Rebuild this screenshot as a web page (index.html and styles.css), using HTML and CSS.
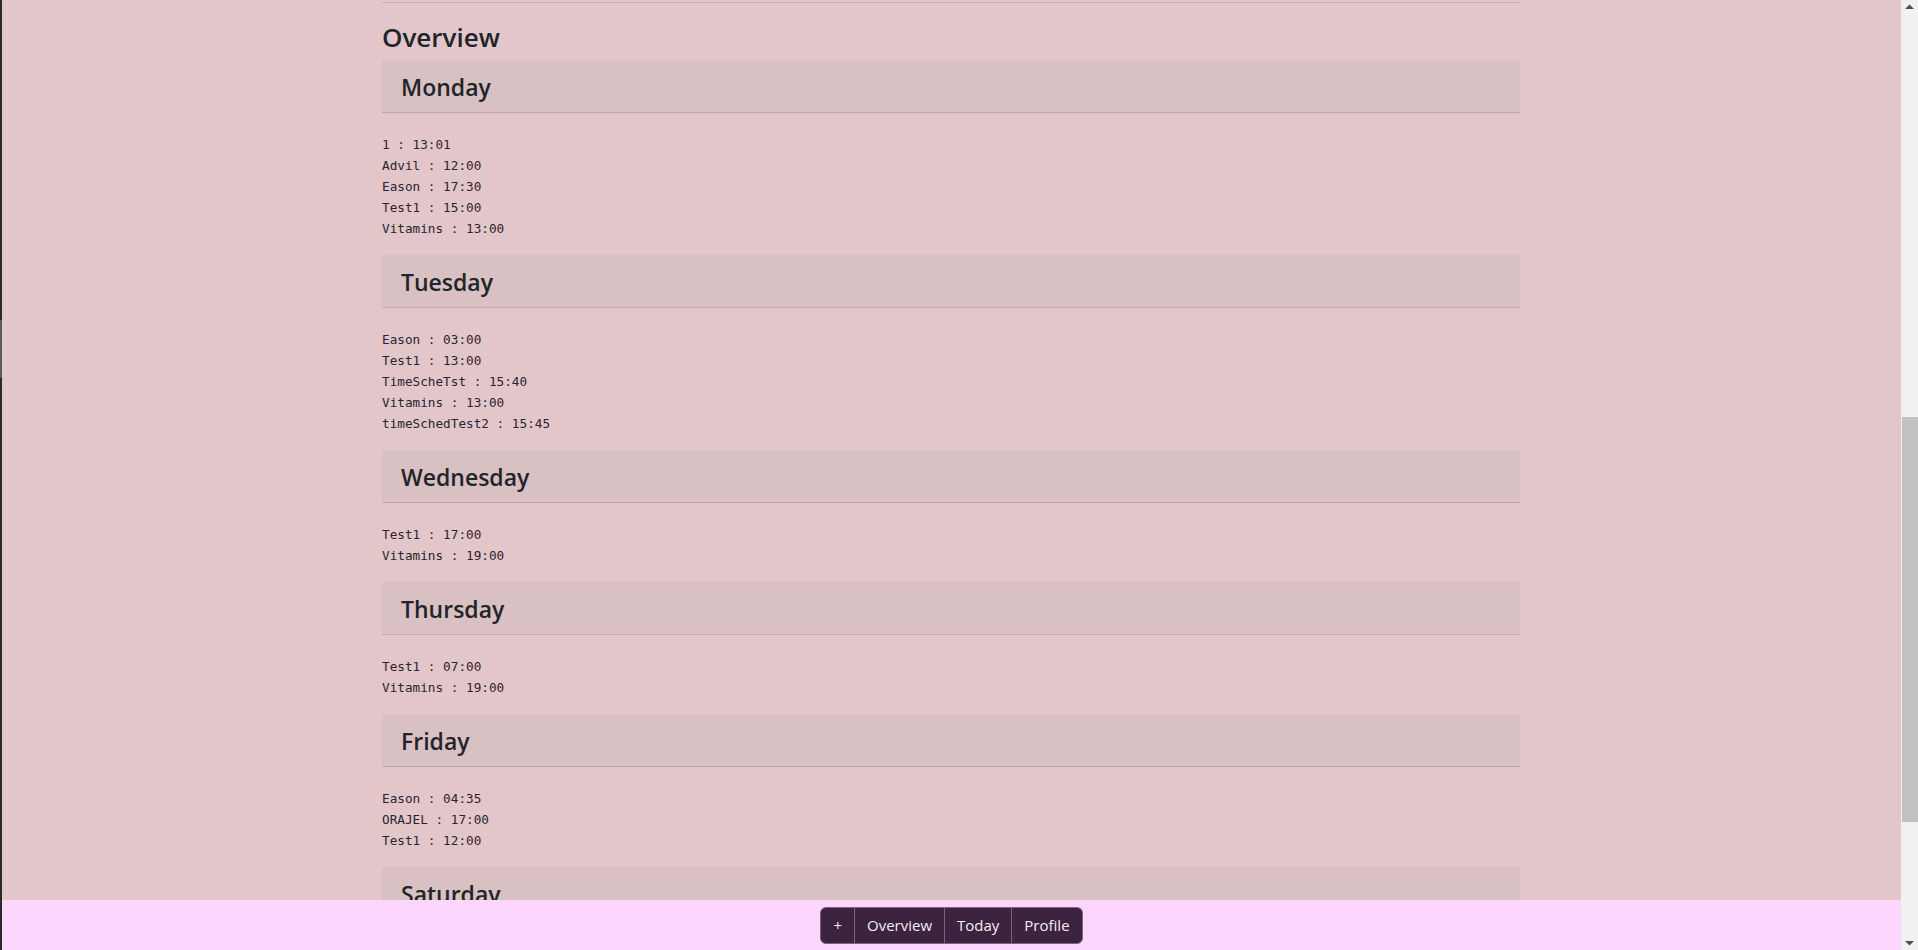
FILE: index.html
```html
<!DOCTYPE html>
<html lang="en">
<head>
<meta charset="utf-8">
<title>Overview</title>
<link rel="stylesheet" href="styles.css">
</head>
<body>
<div class="window">
  <div class="edge">
    <div class="edge-top"></div>
    <div class="edge-mark"></div>
    <div class="edge-rest"></div>
  </div>
  <div class="viewport">
    <main class="page">
      <div class="column">
        <hr class="rule">
        <h3 class="title">Overview</h3>

        <section class="day">
          <h4 class="day-head">Monday</h4>
          <ul class="meds">
            <li>1 : 13:01</li>
            <li>Advil : 12:00</li>
            <li>Eason : 17:30</li>
            <li>Test1 : 15:00</li>
            <li>Vitamins : 13:00</li>
          </ul>
        </section>

        <section class="day">
          <h4 class="day-head">Tuesday</h4>
          <ul class="meds">
            <li>Eason : 03:00</li>
            <li>Test1 : 13:00</li>
            <li>TimeScheTst : 15:40</li>
            <li>Vitamins : 13:00</li>
            <li>timeSchedTest2 : 15:45</li>
          </ul>
        </section>

        <section class="day">
          <h4 class="day-head">Wednesday</h4>
          <ul class="meds">
            <li>Test1 : 17:00</li>
            <li>Vitamins : 19:00</li>
          </ul>
        </section>

        <section class="day">
          <h4 class="day-head">Thursday</h4>
          <ul class="meds">
            <li>Test1 : 07:00</li>
            <li>Vitamins : 19:00</li>
          </ul>
        </section>

        <section class="day">
          <h4 class="day-head">Friday</h4>
          <ul class="meds">
            <li>Eason : 04:35</li>
            <li>ORAJEL : 17:00</li>
            <li>Test1 : 12:00</li>
          </ul>
        </section>

        <section class="day">
          <h4 class="day-head">Saturday</h4>
          <ul class="meds">
            <li>Test1 : 12:00</li>
            <li>Vitamins : 13:00</li>
          </ul>
        </section>
      </div>
    </main>

    <nav class="bottom-nav">
      <div class="btn-group">
        <button class="btn">+</button>
        <button class="btn">Overview</button>
        <button class="btn">Today</button>
        <button class="btn">Profile</button>
      </div>
    </nav>
  </div>
  <div class="scrollbar">
    <div class="sb-arrow">
      <svg width="17" height="17" viewBox="0 0 17 17"><polygon points="4,9 8.5,4.5 13,9" fill="#505050"/></svg>
    </div>
    <div class="sb-gap"></div>
    <div class="sb-thumb"></div>
    <div class="sb-rest"></div>
    <div class="sb-arrow">
      <svg width="17" height="17" viewBox="0 0 17 17"><polygon points="4,8 13,8 8.5,12.5" fill="#505050"/></svg>
    </div>
  </div>
</div>
</body>
</html>
```
FILE: styles.css
```css
* {
  box-sizing: border-box;
}

html, body {
  margin: 0;
  padding: 0;
  height: 100%;
  overflow: hidden;
}

body {
  font-family: "Open Sans", "Noto Sans", sans-serif;
  color: #212529;
  background: #e2c6ca;
}

.window {
  display: flex;
  height: 100vh;
}

/* left window edge */
.edge {
  width: 2px;
  display: flex;
  flex-direction: column;
  background: #2b2a2b;
}

.edge-top {
  height: 320px;
}

.edge-mark {
  height: 58px;
  background: #5c5a5c;
}

.edge-rest {
  flex: 1;
}

/* main scrolled area */
.viewport {
  flex: 1;
  position: relative;
  overflow: hidden;
  background: #e2c6ca;
}

.page {
  display: flex;
  justify-content: center;
  padding-right: 1px;
}

.column {
  width: 1138px;
  padding-top: 2px;
}

.rule {
  margin: 0;
  border: 0;
  border-top: 1px solid #c9afb4;
  height: 1px;
}

.title {
  margin: 0;
  padding: 18px 0 7px;
  font-size: 26px;
  line-height: 32px;
  font-weight: 600;
  color: #212529;
}

.day-head {
  margin: 0;
  height: 53px;
  padding: 2px 19px 0;
  font-size: 23px;
  line-height: 50px;
  font-weight: 600;
  background: #d9c0c3;
  border-bottom: 1px solid #c2a8ad;
  color: #212529;
}

.meds {
  list-style: none;
  margin: 0;
  padding: 21px 0 16px;
  font-family: "DejaVu Sans Mono", "Liberation Mono", monospace;
  font-size: 12.7px;
  line-height: 21px;
  color: #2a2530;
}

/* bottom navigation overlay */
.bottom-nav {
  position: absolute;
  left: 0;
  right: 0;
  bottom: 0;
  height: 50px;
  background: #fcd6fc;
  display: flex;
  justify-content: center;
  align-items: flex-start;
  padding-top: 7px;
}

.btn-group {
  display: inline-flex;
  border-radius: 6px;
}

.btn {
  font-family: "Open Sans", "Noto Sans", sans-serif;
  font-size: 15px;
  line-height: 23px;
  padding: 6px 12px;
  color: #f4eef6;
  background: #3d2340;
  border: 1px solid #76677c;
  margin: 0;
  cursor: pointer;
}

.btn + .btn {
  margin-left: -1px;
}

.btn:first-child {
  border-radius: 6px 0 0 6px;
}

.btn:last-child {
  border-radius: 0 6px 6px 0;
}

/* scrollbar */
.scrollbar {
  width: 17px;
  display: flex;
  flex-direction: column;
  background: #f1f1f1;
}

.sb-arrow {
  height: 17px;
  display: flex;
}

.sb-gap {
  height: 400px;
}

.sb-thumb {
  height: 405px;
  margin: 0 0 0 1px;
  background: #c1c1c1;
}

.sb-rest {
  flex: 1;
}
```
